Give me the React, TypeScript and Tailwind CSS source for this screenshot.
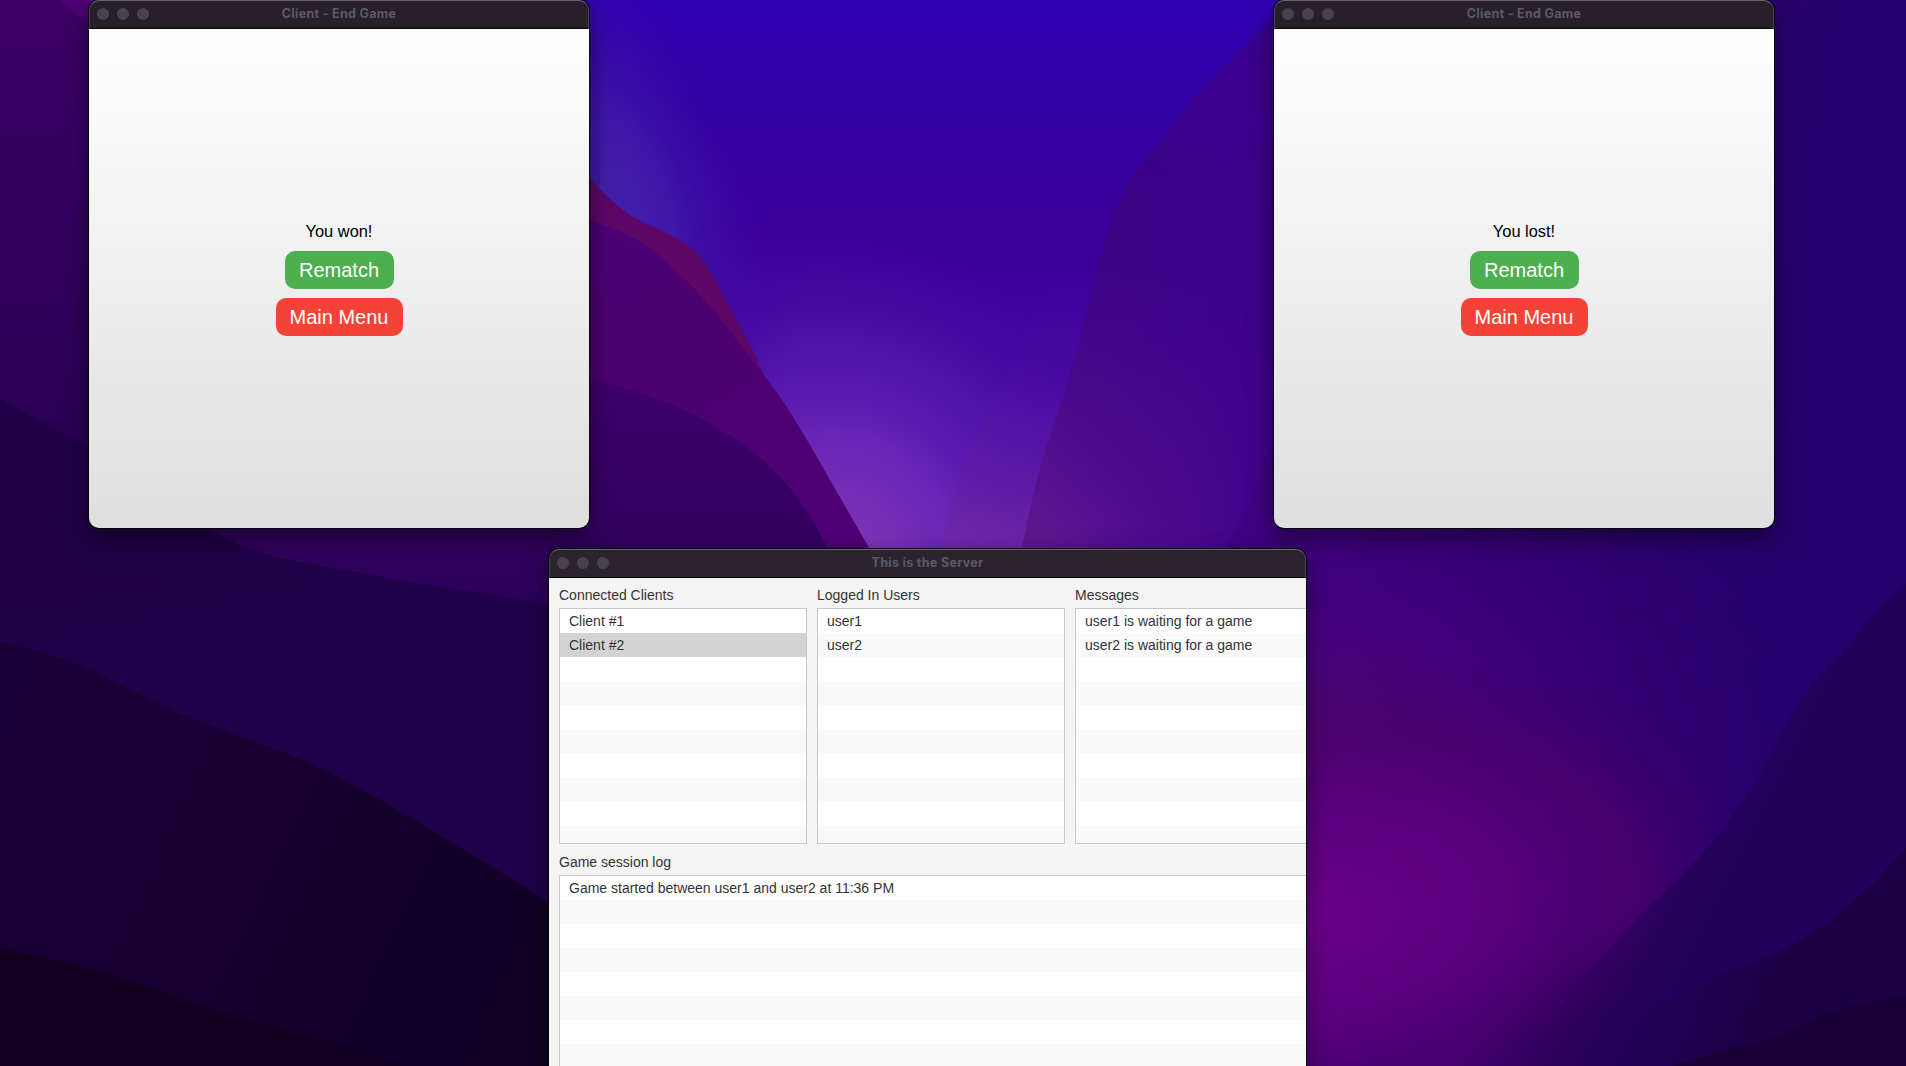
import type { ReactNode } from 'react';

function Wallpaper() {
  return (
    <svg className="absolute inset-0" width="1906" height="1066" viewBox="0 0 1906 1066" preserveAspectRatio="none" aria-hidden="true">
      <defs>
        <linearGradient id="sky" x1="0" y1="0" x2="0" y2="560" gradientUnits="userSpaceOnUse">
          <stop offset="0" stopColor="#3200b4" />
          <stop offset="0.2" stopColor="#3200a2" />
          <stop offset="0.45" stopColor="#3c009a" />
          <stop offset="1" stopColor="#5212ae" />
        </linearGradient>
        <radialGradient id="glow" cx="0" cy="0" r="1" gradientUnits="userSpaceOnUse" gradientTransform="translate(840 570) rotate(-12) scale(300 350)">
          <stop offset="0" stopColor="#8a3cb8" stopOpacity="0.95" />
          <stop offset="0.4" stopColor="#702cba" stopOpacity="0.75" />
          <stop offset="0.7" stopColor="#5618ac" stopOpacity="0.5" />
          <stop offset="1" stopColor="#4808a4" stopOpacity="0" />
        </radialGradient>
        <radialGradient id="haze" cx="0" cy="0" r="1" gradientUnits="userSpaceOnUse" gradientTransform="translate(600 200) rotate(-24) scale(160 300)">
          <stop offset="0" stopColor="#4024a8" />
          <stop offset="0.4" stopColor="#421cac" stopOpacity="0.75" />
          <stop offset="1" stopColor="#3c04a4" stopOpacity="0" />
        </radialGradient>
        <linearGradient id="mid" x1="0" y1="260" x2="0" y2="550" gradientUnits="userSpaceOnUse">
          <stop offset="0" stopColor="#42009a" stopOpacity="0" />
          <stop offset="0.5" stopColor="#5412a0" stopOpacity="0.45" />
          <stop offset="1" stopColor="#7028a6" stopOpacity="0.8" />
        </linearGradient>
        <linearGradient id="rightRidge" x1="0" y1="20" x2="0" y2="560" gradientUnits="userSpaceOnUse">
          <stop offset="0" stopColor="#320094" />
          <stop offset="0.3" stopColor="#390084" />
          <stop offset="0.6" stopColor="#44068a" />
          <stop offset="1" stopColor="#60188f" />
        </linearGradient>
        <linearGradient id="rightFade" x1="1120" y1="0" x2="1860" y2="120" gradientUnits="userSpaceOnUse">
          <stop offset="0" stopColor="#3e0090" stopOpacity="0" />
          <stop offset="0.28" stopColor="#3e008c" stopOpacity="0.85" />
          <stop offset="0.5" stopColor="#38007c" />
          <stop offset="0.8" stopColor="#2b006e" />
          <stop offset="1" stopColor="#25006c" />
        </linearGradient>
        <radialGradient id="violet" cx="0" cy="0" r="1" gradientUnits="userSpaceOnUse" gradientTransform="translate(1280 740) scale(520 300)">
          <stop offset="0" stopColor="#560e76" />
          <stop offset="0.4" stopColor="#46007a" stopOpacity="0.8" />
          <stop offset="1" stopColor="#360070" stopOpacity="0" />
        </radialGradient>
        <radialGradient id="magenta" cx="0" cy="0" r="1" gradientUnits="userSpaceOnUse" gradientTransform="translate(1300 920) rotate(-8) scale(480 260)">
          <stop offset="0" stopColor="#6c0088" />
          <stop offset="0.35" stopColor="#5e0080" stopOpacity="0.95" />
          <stop offset="0.7" stopColor="#4c006e" stopOpacity="0.75" />
          <stop offset="1" stopColor="#3a0066" stopOpacity="0" />
        </radialGradient>
        <radialGradient id="bottomFade" cx="0" cy="0" r="1" gradientUnits="userSpaceOnUse" gradientTransform="translate(1650 1100) scale(200 190)">
          <stop offset="0" stopColor="#220050" />
          <stop offset="0.5" stopColor="#260052" stopOpacity="0.75" />
          <stop offset="1" stopColor="#3a0060" stopOpacity="0" />
        </radialGradient>
        <linearGradient id="farRight" x1="1560" y1="900" x2="1730" y2="985" gradientUnits="userSpaceOnUse">
          <stop offset="0" stopColor="#38005e" stopOpacity="0" />
          <stop offset="0.6" stopColor="#24005a" />
          <stop offset="1" stopColor="#20005a" />
        </linearGradient>
        <linearGradient id="farRight2" x1="1590" y1="1000" x2="1740" y2="1060" gradientUnits="userSpaceOnUse">
          <stop offset="0" stopColor="#260052" stopOpacity="0" />
          <stop offset="1" stopColor="#1b0045" />
        </linearGradient>
        <linearGradient id="leftSky" x1="0" y1="0" x2="0" y2="560" gradientUnits="userSpaceOnUse">
          <stop offset="0" stopColor="#3e0068" />
          <stop offset="0.4" stopColor="#320060" />
          <stop offset="0.75" stopColor="#2a0054" />
          <stop offset="1" stopColor="#2c005a" />
        </linearGradient>
        <linearGradient id="plum" x1="590" y1="220" x2="760" y2="480" gradientUnits="userSpaceOnUse">
          <stop offset="0" stopColor="#4c0078" />
          <stop offset="0.4" stopColor="#4c0070" />
          <stop offset="1" stopColor="#4e0074" />
        </linearGradient>
        <linearGradient id="indigo" x1="0" y1="380" x2="0" y2="610" gradientUnits="userSpaceOnUse">
          <stop offset="0" stopColor="#3e006c" />
          <stop offset="0.5" stopColor="#360064" />
          <stop offset="1" stopColor="#2a0058" />
        </linearGradient>
        <linearGradient id="dark0" x1="0" y1="400" x2="100" y2="900" gradientUnits="userSpaceOnUse">
          <stop offset="0" stopColor="#220048" />
          <stop offset="1" stopColor="#1e0048" />
        </linearGradient>
        <linearGradient id="dark1" x1="0" y1="700" x2="550" y2="960" gradientUnits="userSpaceOnUse">
          <stop offset="0" stopColor="#190038" />
          <stop offset="0.5" stopColor="#150030" />
          <stop offset="1" stopColor="#110024" />
        </linearGradient>
      </defs>
      <rect width="1906" height="1066" fill="url(#sky)" />
      <rect x="500" width="760" height="570" fill="url(#glow)" />
      <rect x="500" width="500" height="560" fill="url(#haze)" />
      <path d="M1085 261C1062 278 1050 293 1039 314C1020 345 1005 380 993 404C980 430 970 455 966 464C955 490 950 505 940 560H1300V261Z" fill="url(#mid)" />
      <path d="M1300 0C1285 5 1277 15 1269 23C1245 44 1232 60 1214 75C1193 97 1180 115 1168 132C1150 154 1140 160 1131 179C1117 202 1113 215 1108 232C1100 255 1096 272 1090 296C1082 330 1076 352 1067 386C1058 412 1050 435 1044 454C1034 490 1028 515 1018 570H1906V0Z" fill="url(#rightRidge)" />
      <path d="M1300 0C1285 5 1277 15 1269 23C1245 44 1232 60 1214 75C1193 97 1180 115 1168 132C1150 154 1140 160 1131 179C1117 202 1113 215 1108 232C1100 255 1096 272 1090 296C1082 330 1076 352 1067 386C1058 412 1050 435 1044 454C1034 490 1028 515 1018 570V1066H1906V0Z" fill="url(#rightFade)" />
      <path d="M1274 440C1264 475 1250 510 1225 550H1290Z" fill="#3c0070" fillOpacity="0.35" />
      <rect x="1280" y="440" width="626" height="626" fill="url(#violet)" />
      <rect x="1280" y="600" width="626" height="466" fill="url(#magenta)" />
      <rect x="1420" y="880" width="486" height="186" fill="url(#bottomFade)" />
      <path d="M1906 583C1880 607 1865 625 1849 644C1827 667 1812 682 1800 702C1787 720 1780 736 1771 753C1760 778 1750 790 1734 814C1720 835 1705 850 1688 868C1675 882 1665 890 1651 904C1610 945 1580 980 1520 1066H1906Z" fill="url(#farRight)" />
      <path d="M1906 847C1885 873 1865 892 1845 908C1828 924 1812 934 1796 942C1775 955 1755 963 1734 969C1680 990 1630 1020 1580 1066H1906Z" fill="url(#farRight2)" />
      <path d="M1906 998C1888 998 1872 1001 1857 1005C1830 1011 1808 1022 1787 1031C1762 1042 1742 1046 1721 1052L1672 1066H1906Z" fill="#160034" />
      <path d="M0 0H580V1066H0Z" fill="url(#leftSky)" />
      <path d="M580 0H600V200H580Z" fill="#3404b0" fillOpacity="0.2" />
      <path d="M61 0C70 12 80 18 100 30V0Z" fill="#4e0076" />
      <path d="M560 145C575 155 582 166 590 178C602 192 612 202 626 212C642 224 658 228 672 236C687 244 692 248 699 255C709 268 716 280 722 293C731 310 739 325 748 341C755 353 759 366 764 375C772 388 782 398 791 414C802 432 812 448 823 468L869 548V600H560Z" fill="#5d0766" />
      <path d="M560 210C570 214 580 218 590 221C607 225 620 231 635 239C650 247 662 257 672 268C686 279 695 289 704 300C718 315 730 330 741 346L764 375C772 388 782 398 791 414C802 432 812 448 823 468L869 548V600H560Z" fill="url(#plum)" />
      <path d="M560 376C570 378 580 378 590 380C612 384 631 389 649 396C672 403 690 412 709 423C730 435 748 447 764 461C776 472 787 484 796 496C809 513 818 530 828 548V620H200V500Z" fill="url(#indigo)" />
      <path d="M0 399C30 415 60 432 88 447C130 475 170 510 211 530C225 538 237 544 250 549C268 556 285 559 307 563L393 579C445 588 500 594 548 606L600 620V1066H0Z" fill="url(#dark0)" />
      <path d="M0 641C24 646 48 653 71 662C100 674 130 690 161 706C202 723 245 738 286 753C320 768 353 784 386 803C412 818 438 834 464 850C492 866 520 884 548 903L600 940V1066H0Z" fill="url(#dark1)" />
      <path d="M0 949C24 953 48 958 71 964C101 971 131 981 161 991C190 1002 220 1012 250 1020L339 1045L396 1066H0Z" fill="#110020" />
    </svg>
  );
}

function TitleBar({ title, tone }: { title: string; tone: string }) {
  return (
    <div className={`relative h-[29px] shrink-0 rounded-t-[10px] border border-b-black border-x-[#4a4550] border-t-[#67626c] ${tone}`}>
      <div className="flex gap-2 pt-[7px] pl-[7px]">
        <span className="size-3 rounded-full bg-[#48424e]" />
        <span className="size-3 rounded-full bg-[#48424e]" />
        <span className="size-3 rounded-full bg-[#48424e]" />
      </div>
      <h1 className="absolute inset-x-0 top-[4px] text-center font-['Inter'] text-[12.5px] leading-[18px] font-bold tracking-[0.025em] text-[#5e5865]">{title}</h1>
    </div>
  );
}

function ClientWindow({ place, message }: { place: string; message: string }) {
  return (
    <section className={`absolute top-0 flex h-[528px] w-[500px] flex-col rounded-[10px] shadow-[0_0_0_1px_#000000cc,0_10px_26px_#00000080] ${place}`}>
      <TitleBar title="Client - End Game" tone="bg-[#27202b]" />
      <div className="flex flex-1 flex-col items-center rounded-b-[10px] bg-linear-to-b from-white to-[#dfdfdf] pt-[193px]">
        <p className="text-[16.4px] leading-[18px] text-black">{message}</p>
        <button className="mt-[11px] h-[38px] w-[109px] rounded-[10px] bg-[#4caf50] text-xl leading-[38px] text-white">Rematch</button>
        <button className="mt-[9px] h-[38px] w-[127px] rounded-[10px] bg-[#f44336] text-xl leading-[38px] text-white">Main Menu</button>
      </div>
    </section>
  );
}

function ListView({ rows, count, size, selected }: { rows: string[]; count: number; size: string; selected?: number }) {
  return (
    <ul className={`overflow-hidden border border-[#c8c8c8] bg-white ${size}`}>
      {Array.from({ length: count }, (_, i) => (
        <li key={i} className={`h-6 pl-[9px] leading-6 whitespace-nowrap ${i === selected ? 'bg-[#d3d3d3]' : i % 2 ? 'bg-[#f9f9f9]' : 'bg-white'}`}>
          {rows[i]}
        </li>
      ))}
    </ul>
  );
}

function Labelled({ label, children }: { label: string; children: ReactNode }) {
  return (
    <div className="shrink-0">
      <h2 className="mb-[5px] h-4 leading-4">{label}</h2>
      {children}
    </div>
  );
}

function ServerWindow() {
  return (
    <section className="absolute top-[549px] left-[549px] flex h-[640px] w-[757px] flex-col rounded-t-[10px] shadow-[0_0_0_1px_#000000e6,0_8px_24px_#00000073]">
      <TitleBar title="This is the Server" tone="bg-[#2b242f]" />
      <div className="flex-1 overflow-hidden bg-[#f4f4f4] pt-[9px] pl-[10px] text-sm text-[#333333]">
        <div className="flex gap-[10px]">
          <Labelled label="Connected Clients">
            <ListView rows={['Client #1', 'Client #2']} count={10} size="h-[236px] w-[248px]" selected={1} />
          </Labelled>
          <Labelled label="Logged In Users">
            <ListView rows={['user1', 'user2']} count={10} size="h-[236px] w-[248px]" />
          </Labelled>
          <Labelled label="Messages">
            <ListView rows={['user1 is waiting for a game', 'user2 is waiting for a game']} count={10} size="h-[236px] w-[248px]" />
          </Labelled>
        </div>
        <div className="mt-[10px]">
          <Labelled label="Game session log">
            <ListView rows={['Game started between user1 and user2 at 11:36 PM']} count={10} size="h-[236px] w-[764px]" />
          </Labelled>
        </div>
      </div>
    </section>
  );
}

export default function App() {
  return (
    <main className="relative h-[1066px] w-[1906px] overflow-hidden bg-[#22004a] font-['Liberation_Sans',Arial,sans-serif]">
      <Wallpaper />
      <ClientWindow place="left-[89px]" message="You won!" />
      <ClientWindow place="left-[1274px]" message="You lost!" />
      <ServerWindow />
    </main>
  );
}
